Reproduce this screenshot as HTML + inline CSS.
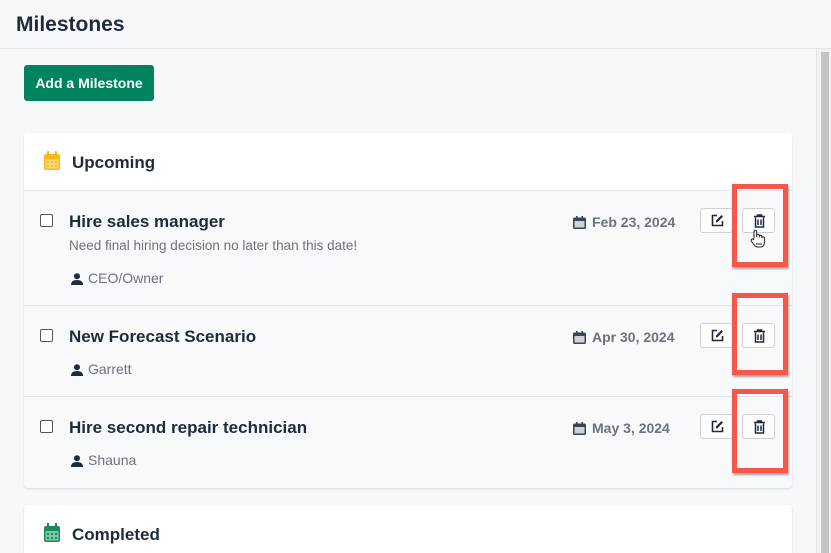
<!DOCTYPE html>
<html style="width:831px;height:553px;overflow:hidden"><head><meta charset="utf-8"><style>
*{box-sizing:border-box;margin:0;padding:0}
body{width:831px;height:553px;overflow:hidden;background:#f7f8f9;font-family:"Liberation Sans",sans-serif;color:#1f2a3c;position:relative}
.top{height:49px;border-bottom:1px solid #e3e6e9;padding:12px 16px}
.top h1{font-size:21px;font-weight:bold;line-height:26px}
.btn{position:absolute;left:24px;top:65px;width:130px;height:36px;background:#00845f;color:#fff;border-radius:3px;font-size:14px;font-weight:bold;line-height:36px;text-align:center}
.card{position:absolute;left:24px;width:768px;background:#f8f9fa;border-radius:4px;box-shadow:0 1px 2px rgba(0,0,0,.12);overflow:hidden}
.hd{background:#fff;height:58px;border-bottom:1px solid #e3e6e9;position:relative}
.hd span{position:absolute;left:48px;top:20px;font-size:17px;font-weight:bold}
.hd svg{position:absolute;left:19px;top:18px}
.row{position:relative;border-bottom:1px solid #e3e6e9}
.cb{position:absolute;left:16px;width:13px;height:13px;border:1.3px solid #555;border-radius:2px;background:#fff}
.t{position:absolute;left:45px;font-size:17px;font-weight:bold}
.d{position:absolute;left:45px;font-size:13.5px;color:#6b7280}
.p{position:absolute;left:45px;font-size:14px;color:#6b7280;padding-left:19px}
.p svg{position:absolute;left:2px;top:3px}
.date{position:absolute;left:549px;font-size:14px;font-weight:bold;color:#6b7280;padding-left:19px}
.date svg{position:absolute;left:0;top:2px}
.ib{position:absolute;width:33px;height:25px;border:1px solid #ccd0d5;border-radius:3px;background:#fff}
.ib svg{position:absolute;left:10px;top:5px}
.red{position:absolute;left:732px;width:56px;border:5px solid #f4574b;box-shadow:1px 2px 2px rgba(0,0,0,.35)}
.sb{position:absolute;left:816px;top:49px;width:15px;height:504px;background:#f1f1f1;border-left:1px solid #e3e3e3}
.sb div{position:absolute;left:4px;top:3px;width:8px;height:504px;background:#c4c4c4}
</style></head><body>
<div class="top"><h1>Milestones</h1></div>
<div class="btn">Add a Milestone</div>

<div class="card" style="top:133px;height:355px">
 <div class="hd"><svg width="18" height="20" viewBox="0 0 18 20"><rect x="1" y="3" width="16" height="16" rx="2" fill="#fbb61e"/><rect x="4" y="0" width="2" height="5" fill="#fbb61e"/><rect x="12" y="0" width="2" height="5" fill="#fbb61e"/><rect x="2.5" y="8" width="13" height="9.5" fill="#ffd978"/><g fill="#fbb61e"><rect x="4" y="10" width="2" height="2"/><rect x="8" y="10" width="2" height="2"/><rect x="12" y="10" width="2" height="2"/><rect x="4" y="14" width="2" height="2"/><rect x="8" y="14" width="2" height="2"/><rect x="12" y="14" width="2" height="2"/></g></svg><span>Upcoming</span></div>
 <div class="row" style="height:115px">
  <div class="cb" style="top:23px"></div>
  <div class="t" style="top:21px">Hire sales manager</div>
  <div class="d" style="top:47px">Need final hiring decision no later than this date!</div>
  <div class="p" style="top:79px"><svg width="12" height="12" viewBox="0 0 12 12"><circle cx="6" cy="3.3" r="3" fill="#1f2a3c"/><path d="M0 12 Q0 7 6 7 Q12 7 12 12Z" fill="#1f2a3c"/></svg>CEO/Owner</div>
  <div class="date" style="top:23px"><svg width="13" height="13" viewBox="0 0 13 13"><rect x="0" y="1.5" width="13" height="11.5" rx="1.5" fill="#3a4556"/><rect x="1.5" y="5" width="10" height="6.5" fill="#cfd3d8"/><rect x="3" y="0" width="1.6" height="3" fill="#3a4556"/><rect x="8.4" y="0" width="1.6" height="3" fill="#3a4556"/></svg>Feb 23, 2024</div>
  <div class="ib" style="left:676px;top:17px"><svg width="13" height="13" viewBox="0 0 13 13"><path d="M6 1.5H1.5v10h10V7" fill="none" stroke="#1f2a3c" stroke-width="1.6"/><path d="M5 8.2V6.5L10.5 1l1.5 1.5L6.5 8.2Z" fill="#1f2a3c"/></svg></div>
  <div class="ib" style="left:718px;top:17px"><svg width="13" height="14" viewBox="0 0 13 14"><path d="M1 2.5h11M4.5 2.5V1h4v1.5M2.5 3.5v9.5h8V3.5M5 5.5v5.5M8 5.5v5.5" fill="none" stroke="#1f2a3c" stroke-width="1.5"/></svg></div>
 </div>
 <div class="row" style="height:91px">
  <div class="cb" style="top:23px"></div>
  <div class="t" style="top:21px">New Forecast Scenario</div>
  <div class="p" style="top:55px"><svg width="12" height="12" viewBox="0 0 12 12"><circle cx="6" cy="3.3" r="3" fill="#1f2a3c"/><path d="M0 12 Q0 7 6 7 Q12 7 12 12Z" fill="#1f2a3c"/></svg>Garrett</div>
  <div class="date" style="top:23px"><svg width="13" height="13" viewBox="0 0 13 13"><rect x="0" y="1.5" width="13" height="11.5" rx="1.5" fill="#3a4556"/><rect x="1.5" y="5" width="10" height="6.5" fill="#cfd3d8"/><rect x="3" y="0" width="1.6" height="3" fill="#3a4556"/><rect x="8.4" y="0" width="1.6" height="3" fill="#3a4556"/></svg>Apr 30, 2024</div>
  <div class="ib" style="left:676px;top:17px"><svg width="13" height="13" viewBox="0 0 13 13"><path d="M6 1.5H1.5v10h10V7" fill="none" stroke="#1f2a3c" stroke-width="1.6"/><path d="M5 8.2V6.5L10.5 1l1.5 1.5L6.5 8.2Z" fill="#1f2a3c"/></svg></div>
  <div class="ib" style="left:718px;top:17px"><svg width="13" height="14" viewBox="0 0 13 14"><path d="M1 2.5h11M4.5 2.5V1h4v1.5M2.5 3.5v9.5h8V3.5M5 5.5v5.5M8 5.5v5.5" fill="none" stroke="#1f2a3c" stroke-width="1.5"/></svg></div>
 </div>
 <div class="row" style="height:91px;border:0">
  <div class="cb" style="top:23px"></div>
  <div class="t" style="top:21px">Hire second repair technician</div>
  <div class="p" style="top:55px"><svg width="12" height="12" viewBox="0 0 12 12"><circle cx="6" cy="3.3" r="3" fill="#1f2a3c"/><path d="M0 12 Q0 7 6 7 Q12 7 12 12Z" fill="#1f2a3c"/></svg>Shauna</div>
  <div class="date" style="top:23px"><svg width="13" height="13" viewBox="0 0 13 13"><rect x="0" y="1.5" width="13" height="11.5" rx="1.5" fill="#3a4556"/><rect x="1.5" y="5" width="10" height="6.5" fill="#cfd3d8"/><rect x="3" y="0" width="1.6" height="3" fill="#3a4556"/><rect x="8.4" y="0" width="1.6" height="3" fill="#3a4556"/></svg>May 3, 2024</div>
  <div class="ib" style="left:676px;top:17px"><svg width="13" height="13" viewBox="0 0 13 13"><path d="M6 1.5H1.5v10h10V7" fill="none" stroke="#1f2a3c" stroke-width="1.6"/><path d="M5 8.2V6.5L10.5 1l1.5 1.5L6.5 8.2Z" fill="#1f2a3c"/></svg></div>
  <div class="ib" style="left:718px;top:17px"><svg width="13" height="14" viewBox="0 0 13 14"><path d="M1 2.5h11M4.5 2.5V1h4v1.5M2.5 3.5v9.5h8V3.5M5 5.5v5.5M8 5.5v5.5" fill="none" stroke="#1f2a3c" stroke-width="1.5"/></svg></div>
 </div>
</div>

<div class="card" style="top:505px;height:48px;background:#fff;border-radius:4px 4px 0 0">
 <div class="hd" style="border:0"><svg width="18" height="20" viewBox="0 0 18 20"><rect x="1" y="3" width="16" height="16" rx="2" fill="#1a8a5e"/><rect x="4" y="0" width="2" height="5" fill="#1a8a5e"/><rect x="12" y="0" width="2" height="5" fill="#1a8a5e"/><rect x="2.5" y="8" width="13" height="9.5" fill="#7cc7a6"/><g fill="#1a8a5e"><rect x="4" y="10" width="2" height="2"/><rect x="8" y="10" width="2" height="2"/><rect x="12" y="10" width="2" height="2"/><rect x="4" y="14" width="2" height="2"/><rect x="8" y="14" width="2" height="2"/><rect x="12" y="14" width="2" height="2"/></g></svg><span style="top:20px">Completed</span></div>
</div>

<div class="red" style="top:184px;height:83px"></div>
<div class="red" style="top:293px;height:82px"></div>
<div class="red" style="top:389px;height:84px"></div>
<svg style="position:absolute;left:750px;top:229px" width="16" height="19" viewBox="0 0 16 19"><path d="M4 9V2.5a1.3 1.3 0 0 1 2.6 0V8V6.5a1.3 1.3 0 0 1 2.6 0V8.5V7.5a1.3 1.3 0 0 1 2.6 0V9a1.3 1.3 0 0 1 2.6 0v4.5c0 2.5-1.5 4.5-4 4.5H7.5C5.5 18 4.5 16.5 3 14.5L1.3 12a1.3 1.3 0 0 1 2.1-1.5Z" fill="#fff" stroke="#222" stroke-width="1"/><path d="M7 14v2M9 14v2M11 14v2" stroke="#222" stroke-width="1"/></svg>
<div class="sb"><div></div></div>
</body></html>
